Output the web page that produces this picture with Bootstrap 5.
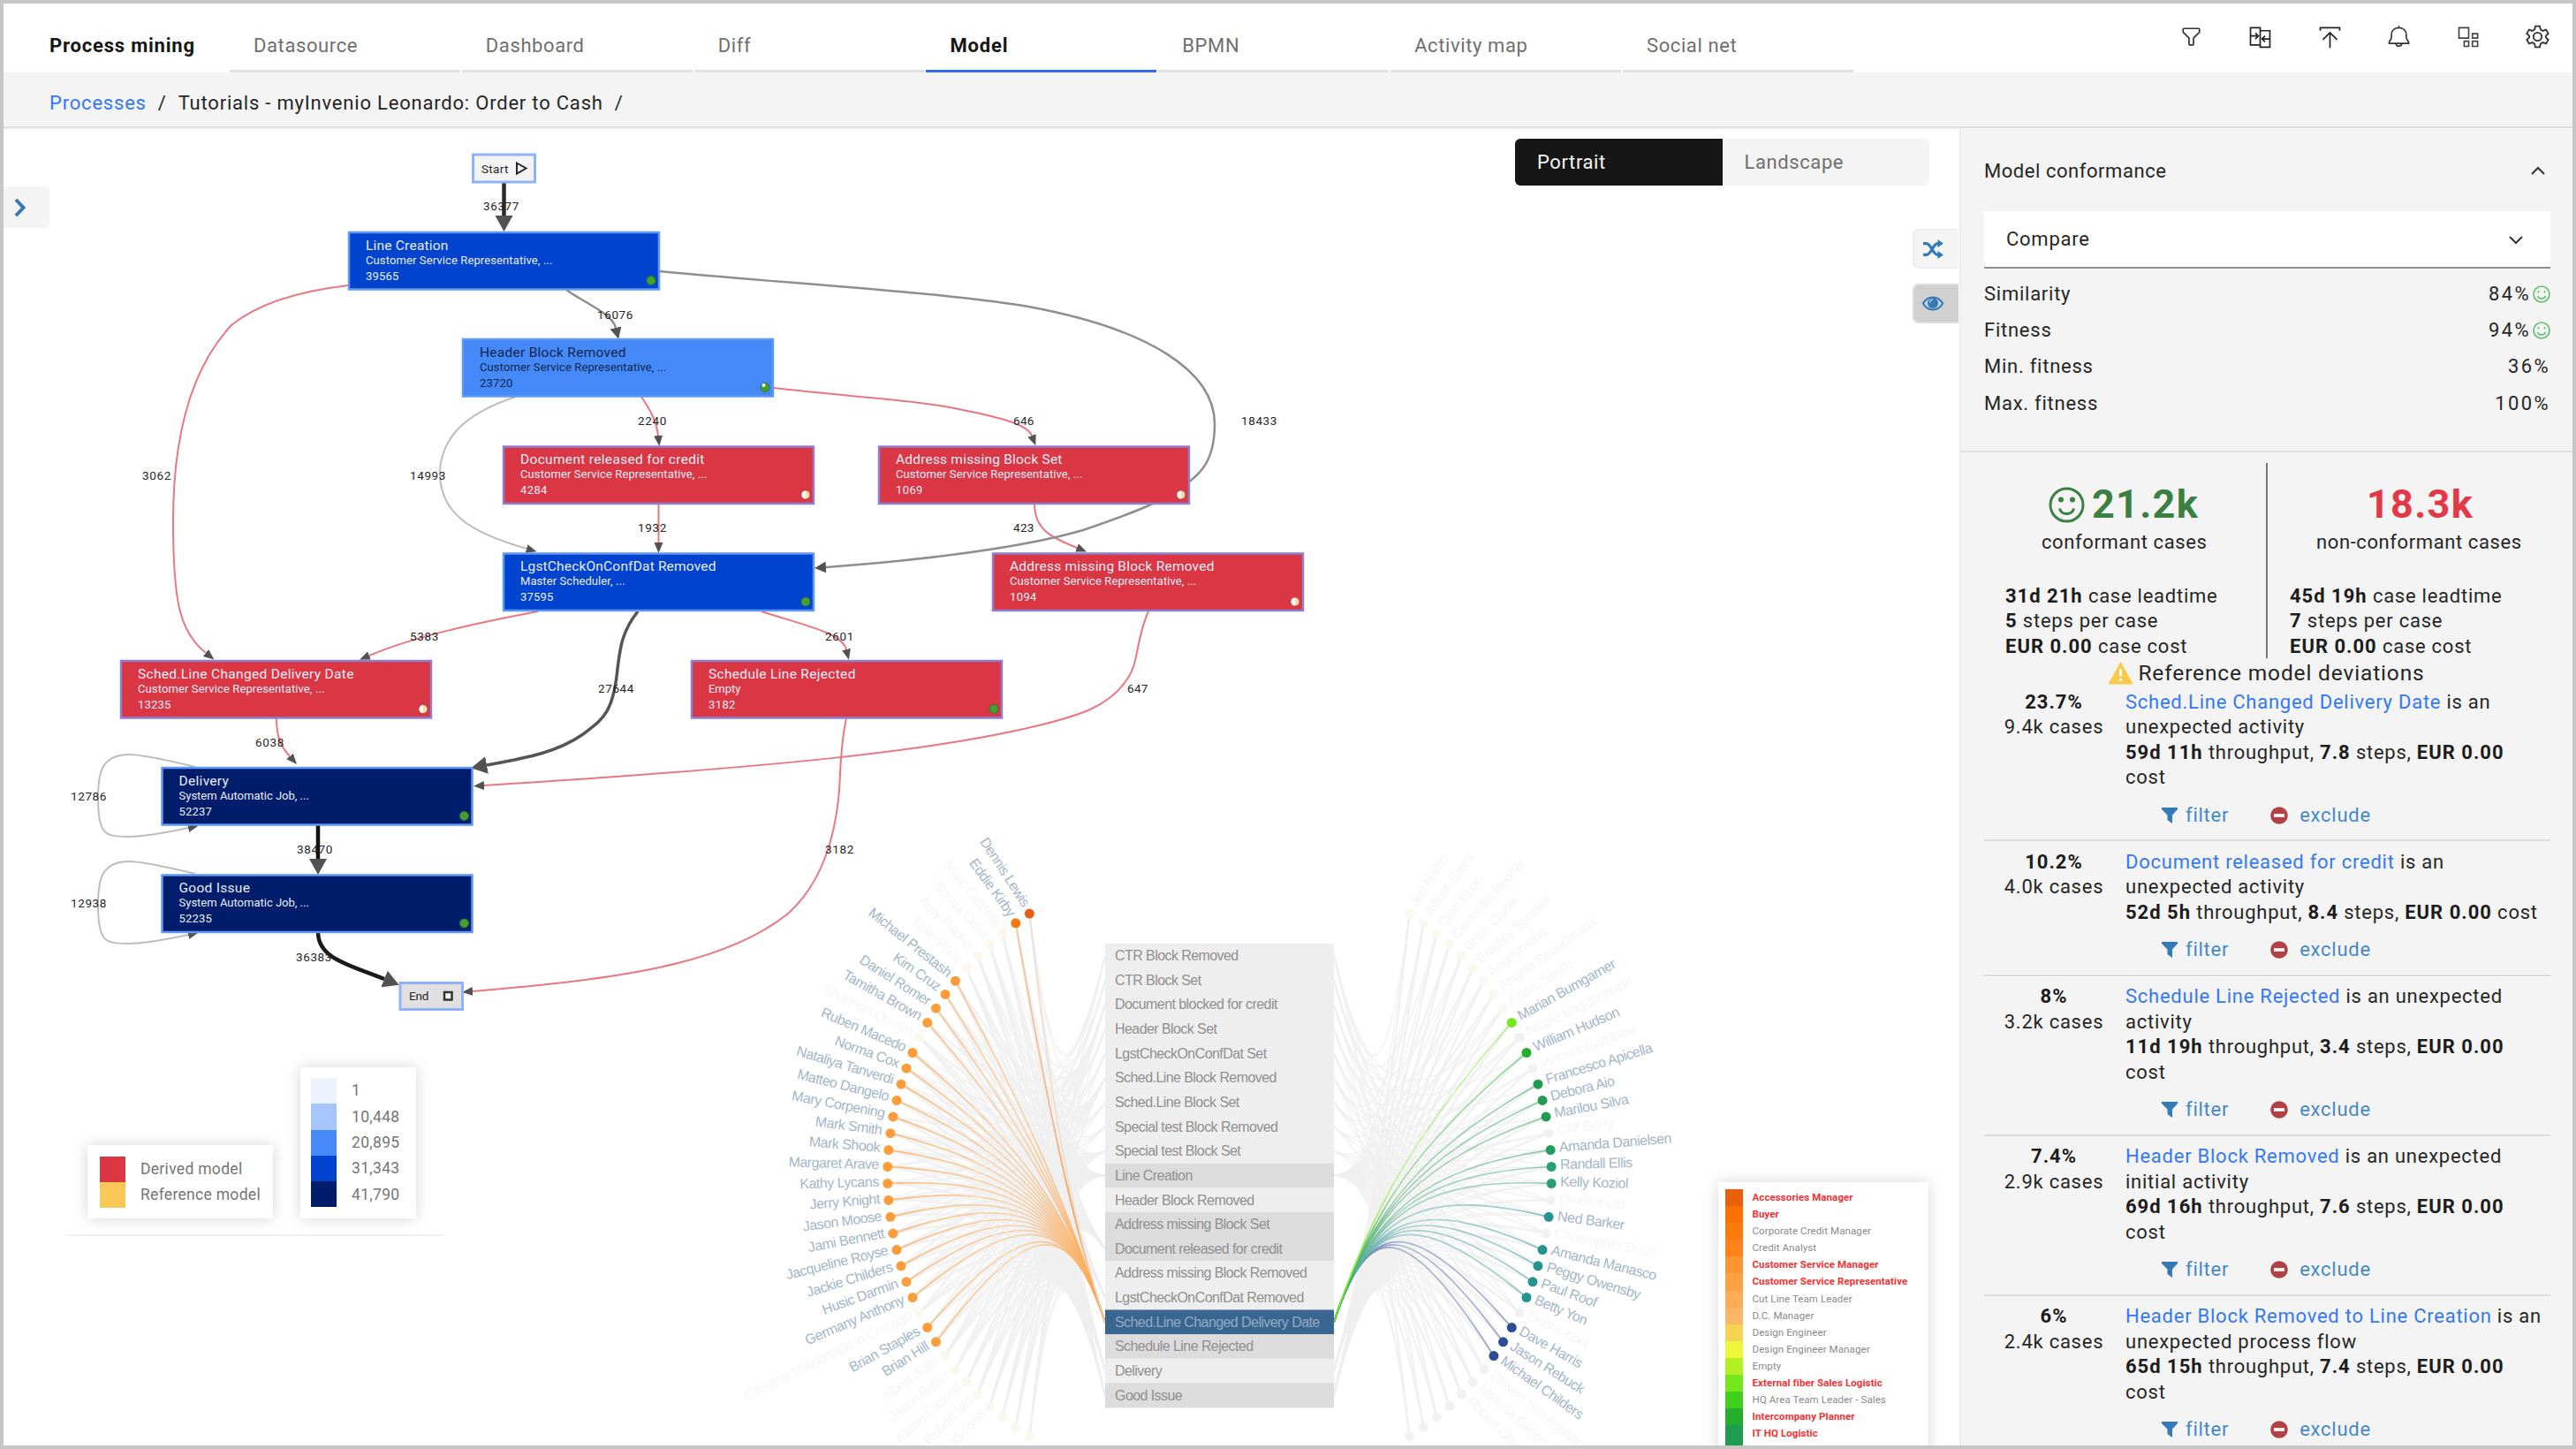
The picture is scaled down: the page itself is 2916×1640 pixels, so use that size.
<!DOCTYPE html>
<html lang="en">
<head>
<meta charset="utf-8">
<title>Process mining</title>
<link href="https://cdn.jsdelivr.net/npm/bootstrap@5.3.0/dist/css/bootstrap.min.css" rel="stylesheet">
<script src="https://cdn.jsdelivr.net/npm/bootstrap@5.3.0/dist/js/bootstrap.bundle.min.js"></script>
<style>
  body{width:2916px;height:1640px;overflow:hidden;border:4px solid #c6c6c6;background:#fff;color:#262626;
    font-family:Roboto,"Noto Sans",sans-serif;font-size:22px;letter-spacing:.6px;line-height:28.5px}
  .topbar{height:78px;padding:0 26px 0 52px}
  .brandname{width:204px;padding-top:34px;font-weight:700;letter-spacing:.8px;color:#161616;white-space:nowrap}
  .tab-item{width:261px;height:78px;margin-right:1.83px;padding:34px 0 0 27px;border-bottom:3px solid #e0e0e0;color:#6f6f6f}
  .tab-item.active{border-color:#2f6bf5;color:#161616;font-weight:700;letter-spacing:.8px}
  .top-icons{gap:51.4px;padding-top:24px}
  .top-icons svg{width:27px;height:27px;display:block}
  .crumbs{height:63px;padding:9px 0 0 52px;gap:13px;letter-spacing:.8px;background:#f4f4f4;border-bottom:2px solid #e0e0e0;margin-bottom:2px;box-shadow:0 2px #f4f4f4}
  .crumbs a,.dev a{color:#3378f6;text-decoration:none}
  .stage{width:2214px}
  .sidepane{width:694px;background:#f4f4f4;border-left:2px solid #ececec;letter-spacing:.75px}
  .switcher{margin:10px 34px 0 0;height:53px;width:469px;border-radius:6px;overflow:hidden;background:#f4f4f4;color:#6f6f6f}
  .switcher>div{width:50%;padding:13px 25px}
  .switcher .on{background:#161616;color:#f4f4f4}
  .edge-btn{right:1px;width:52px;height:45px;background:#f4f4f4;border:2px solid #ededed;border-right:0;border-radius:7px 0 0 7px}
  .edge-btn.on{background:#d0d0d0;border-color:#dcdcdc}
  .graph{left:0;top:0;width:2213px;height:1489px}
  .legend{background:#fff;box-shadow:0 0 16px rgba(0,0,0,.17);color:#757575;font-size:17.5px;letter-spacing:.3px}
  .sw{width:29px;height:29.3px;margin-right:17px}
  .roles{font-size:11.5px;letter-spacing:.1px;line-height:19.05px;color:#8a8a8a}
  .roles .rs{width:19.5px;height:19.1px;margin-right:11px}
  .roles .hot{color:#fb3030;font-weight:700}
  .conf{height:365px;padding:33px 25px 0 26px;border-bottom:2px solid #dedede}
  .conf .heading{letter-spacing:.55px}
  .pick{height:65px;margin-top:30px;padding:3px 25px 0;background:#fff;border-bottom:2px solid #8d8d8d}
  .metric{height:41.3px}
  .metric .val{letter-spacing:2.4px}
  .stats{height:221px;margin-top:12px}
  .stats .half{width:345px;padding:22px 0 0 50px}
  .stats .half+.half{border-left:2px solid #777;padding-left:25px}
  .stats .cap{margin:4px 0 32px;letter-spacing:.6px}
  .big{font-size:45px;line-height:50px;font-weight:700;letter-spacing:1.3px}
  b{font-weight:700;letter-spacing:1px;color:#1c1c1c}
  .devhead{font-size:24.5px;letter-spacing:.85px;line-height:34px;height:34px}
  .dev{margin:0 25px 0 26px;padding-top:9.5px;border-bottom:2px solid #dcdcdc;white-space:nowrap}
  .dev .pct{width:158px;text-align:center}
  .acts{height:55.5px;padding:1px 0 0 201px;color:#4489c8}
</style>
</head>
<body class="d-flex flex-column">
<header class="topbar d-flex flex-shrink-0">
  <div class="brandname">Process mining</div>
  <nav class="d-flex flex-grow-1">
    <div class="tab-item">Datasource</div><div class="tab-item">Dashboard</div><div class="tab-item">Diff</div>
    <div class="tab-item active">Model</div><div class="tab-item">BPMN</div><div class="tab-item">Activity map</div><div class="tab-item">Social net</div>
  </nav>
  <div class="top-icons d-flex">
    <svg viewBox="0 0 32 32" fill="#333"><path d="M18,28H14a2,2,0,0,1-2-2V18.41L4.59,11A2,2,0,0,1,4,9.59V6A2,2,0,0,1,6,4H26a2,2,0,0,1,2,2V9.59A2,2,0,0,1,27.41,11L20,18.41V26A2,2,0,0,1,18,28ZM6,6V9.59l8,8V26h4V17.59l8-8V6Z"/></svg>
    <svg viewBox="0 0 32 32" fill="none" stroke="#222" stroke-width="2"><path d="M16 27H3V4h13v26h13V8H16M3 15h10M9.500 11l4 4-4 4M29 19H19M22.500 15l-4 4 4 4"/></svg>
    <svg viewBox="0 0 32 32" fill="none" stroke="#222" stroke-width="2"><path d="M3 8V4h26v4M16 31V11M6.500 20L16 10.500l9.500 9.500"/></svg>
    <svg viewBox="0 0 32 32" fill="none" stroke="#333" stroke-width="2"><path d="M3 25v-2c2-2 3-3 3-6v-3c0-6 4-10 10-10s10 4 10 10v3c0 3 1 4 3 6v2zM16 4V1.500M12 25c0 5 8 5 8 0"/></svg>
    <svg viewBox="0 0 32 32" fill="none" stroke="#444" stroke-width="2"><path d="M3 4h13v14H3zM21 12h7v6h-7zM10 22h6v7h-6zM21 22h7v7h-7z"/></svg>
    <svg viewBox="0 0 32 32" fill="none" stroke="#333" stroke-width="2.200"><circle cx="16" cy="16" r="5.500"/><path d="M13 2h6l1 4.500 3 1.700 4.400-1.500 3 5.200-3.300 3.100v2l3.300 3.100-3 5.200-4.400-1.500-3 1.700L19 30h-6l-1-4.500-3-1.700-4.400 1.500-3-5.200L4.900 17v-2l-3.300-3.100 3-5.200L9 8.200l3-1.700z"/></svg>
  </div>
</header>
<div class="crumbs d-flex align-items-center flex-shrink-0">
  <a href="#">Processes</a><span>/</span><span>Tutorials - myInvenio Leonardo: Order to Cash</span><span>/</span>
</div>
<main class="d-flex flex-grow-1 overflow-hidden">
  <section class="stage position-relative flex-shrink-0 overflow-hidden">
    <svg class="graph position-absolute" viewBox="4 147 2213 1489" id="graph">
      <defs>
        <marker id="a1" markerUnits="userSpaceOnUse" markerWidth="13" markerHeight="10" refX="0" refY="5" orient="auto"><path d="M0 0L12 5L0 10z" fill="#525252"/></marker>
        <marker id="a2" markerUnits="userSpaceOnUse" markerWidth="15" markerHeight="13" refX="0" refY="6.500" orient="auto"><path d="M0 0L13 6.500L0 13z" fill="#525252"/></marker>
        <marker id="a3" markerUnits="userSpaceOnUse" markerWidth="19" markerHeight="20" refX="0" refY="10" orient="auto"><path d="M0 0L18 10L0 20z" fill="#525252"/></marker>
      </defs>
      <path d="M75 1398H503" stroke="#f1f1f1" stroke-width="2"/>
      <g id="bundle" fill="none"></g>
      <g id="dots"></g>
      <g id="people" font-family="Liberation Sans, Arial, sans-serif" font-size="16"></g>
      <g id="acts" font-family="Liberation Sans, Arial, sans-serif" font-size="16"></g>
      <g fill="none" stroke="#ec7680" stroke-width="2">
        <path marker-end="url(#a1)" d="M394 323C335 330 290 345 262 368C218 415 196 490 196 590C196 680 203 715 233 739"/>
        <path marker-end="url(#a1)" d="M726 449C736 464 743 476 745 493"/>
        <path marker-end="url(#a1)" d="M876 439C960 449 1030 452 1085 463C1130 472 1163 480 1168 493"/>
        <path marker-end="url(#a1)" d="M745.500 570V614"/>
        <path marker-end="url(#a1)" d="M1171 570C1171 600 1190 608 1219 620"/>
        <path marker-end="url(#a1)" d="M609 692C540 705 470 720 418 742"/>
        <path marker-end="url(#a1)" d="M862 692C900 705 953 715 958 735"/>
        <path marker-end="url(#a1)" d="M313 813C313 835 318 845 328 856"/>
        <path marker-end="url(#a1)" d="M1300 692C1285 725 1290 750 1275 770C1255 800 1220 810 1180 820C1060 850 880 868 548 889"/>
        <path marker-end="url(#a1)" d="M958 813C950 850 952 880 949 905C944 950 930 1000 892 1034C820 1092 700 1108 535 1122"/>
      </g>
      <g fill="none" stroke="#bdbdbd" stroke-width="2">
        <path marker-end="url(#a1)" d="M584 449C520 470 499 500 498 535C498 580 530 602 596 621"/>
        <path marker-end="url(#a1)" d="M221 868C180 858 160 854 146 854C112 854 111 880 111 903C111 944 118 947 145 947C165 947 190 942 213 937"/>
        <path marker-end="url(#a1)" d="M221 989C180 979 160 975 146 975C112 975 111 1001 111 1024C111 1065 118 1068 145 1068C165 1068 190 1063 213 1058"/>
      </g>
      <g fill="none" stroke="#8e8e8e" stroke-width="2.500">
        <path marker-end="url(#a2)" d="M641 328C662 343 693 355 697 371"/>
        <path marker-end="url(#a2)" d="M746 307C880 320 1060 330 1164 347C1300 372 1375 420 1375 480C1375 520 1360 535 1345 546C1320 566 1290 578 1226 600C1150 622 1040 634 935 642"/>
      </g>
      <path fill="none" stroke="#555" stroke-width="3.500" marker-end="url(#a3)" d="M722 692C703 716 702 735 699 757C694 810 680 815 660 831C630 852 594 858 551 866"/>
      <path fill="none" stroke="#2a2a2a" stroke-width="4.500" marker-end="url(#a3)" d="M570.500 207V244"/>
      <path fill="none" stroke="#111" stroke-width="4.500" marker-end="url(#a3)" d="M360 934V972"/>
      <path fill="none" stroke="#1a1a1a" stroke-width="4.500" marker-end="url(#a3)" d="M360 1055C360 1085 395 1092 435 1108"/>
      <g id="nodes"></g>
      <g id="counts" font-size="13.500" fill="#262626"></g>
      <g stroke="#8db4fb" stroke-width="3" font-size="13.500">
        <rect x="535.500" y="175" width="70" height="31" fill="#f4f4f4"/>
        <rect x="453" y="1112.500" width="70.500" height="30" fill="#e0e0e0"/>
        <g stroke="none" fill="#262626"><text x="545" y="195.500" textLength="31">Start</text><text x="463" y="1132" textLength="23">End</text></g>
        <path d="M585 184.500L595.500 190.500L585 196.500z" fill="none" stroke="#262626" stroke-width="2"/>
        <rect x="503" y="1123" width="8.500" height="8.500" fill="#f4f4f4" stroke="#333" stroke-width="2.500"/>
      </g>
    </svg>
    <div class="switcher d-flex ms-auto position-relative"><div class="on">Portrait</div><div>Landscape</div></div>
    <div class="position-absolute start-0 d-flex align-items-center ps-2" style="top:64px;width:52px;height:47px;background:#f4f4f4;border-radius:0 5px 5px 0">
      <svg width="24" height="24" viewBox="0 0 24 24" fill="none" stroke="#337ab7" stroke-width="4"><path d="M6 3l8.500 9L6 21"/></svg>
    </div>
    <div class="edge-btn position-absolute d-flex align-items-center ps-2" style="top:112px">
      <svg width="26" height="22" viewBox="0 0 28 24" fill="none" stroke="#337ab7" stroke-width="3.500"><path d="M2 5h4c6 0 8 14 14 14h1M2 19h4c6 0 8-14 14-14h1"/><path d="M20 0l7 5-7 5zM20 14l7 5-7 5z" fill="#337ab7" stroke="none"/></svg>
    </div>
    <div class="edge-btn on position-absolute d-flex align-items-center ps-2" style="top:174px">
      <svg width="26" height="19" viewBox="0 0 28 20"><path d="M2 10c6-10 18-10 24 0c-6 10-18 10-24 0z" fill="#c5d6e6" stroke="#337ab7" stroke-width="2.200"/><circle cx="14" cy="9.500" r="6.500" fill="#337ab7"/><path d="M10.500 9c0-2.500 1.500-4 3.500-4" stroke="#c5d6e6" stroke-width="1.500" fill="none"/></svg>
    </div>
    <div class="legend position-absolute" style="left:95px;top:1149px;width:210px;height:83px;padding:12.500px 14px">
      <div class="d-flex align-items-center"><span class="sw" style="background:#da3644"></span>Derived model</div>
      <div class="d-flex align-items-center text-nowrap"><span class="sw" style="background:#fbc756"></span>Reference model</div>
    </div>
    <div class="legend position-absolute" style="left:336px;top:1061px;width:131px;height:171px;padding:12px">
      <div class="d-flex align-items-center"><span class="sw" style="background:#edf3fe"></span>1</div>
      <div class="d-flex align-items-center"><span class="sw" style="background:#a6c6fb"></span>10,448</div>
      <div class="d-flex align-items-center"><span class="sw" style="background:#4589f8"></span>20,895</div>
      <div class="d-flex align-items-center"><span class="sw" style="background:#0043ce"></span>31,343</div>
      <div class="d-flex align-items-center"><span class="sw" style="background:#001d6c"></span>41,790</div>
    </div>
    <div class="legend roles position-absolute text-nowrap" style="left:1941px;top:1191px;width:238px;height:310px;padding:8px 8px" id="roles"></div>
  </section>
  <aside class="sidepane flex-shrink-0">
    <div class="conf">
      <div class="heading d-flex justify-content-between align-items-center"><span>Model conformance</span>
        <svg width="20" height="14" class="me-1" viewBox="0 0 20 14" fill="none" stroke="#333" stroke-width="2"><path d="M3 10l7-7 7 7"/></svg></div>
      <div class="pick d-flex justify-content-between align-items-center"><span>Compare</span>
        <svg width="20" height="14" viewBox="0 0 20 14" class="me-1" fill="none" stroke="#333" stroke-width="2"><path d="M3 3l7 7 7-7"/></svg></div>
      <div style="padding-top:9px" id="metrics"></div>
    </div>
    <div class="stats d-flex">
      <div class="half">
        <div class="d-flex align-items-center" style="color:#3a8040;gap:8px;padding-left:49px">
          <svg width="41" height="41" viewBox="0 0 41 41" fill="none" stroke="#3a8040" stroke-width="3"><circle cx="20.500" cy="20.500" r="18.500"/><path d="M12.500 24.500c2 8 14 8 16 0"/><g fill="#3a8040" stroke="none"><circle cx="14" cy="14.500" r="3"/><circle cx="27" cy="14.500" r="3"/></g></svg>
          <span class="big">21.2k</span></div>
        <div class="cap" style="padding-left:41px">conformant cases</div>
        <div><b>31d 21h</b> case leadtime</div><div><b>5</b> steps per case</div><div><b>EUR 0.00</b> case cost</div>
      </div>
      <div class="half">
        <div class="big" style="color:#e23848;padding-left:87px">18.3k</div>
        <div class="cap" style="padding-left:30px">non-conformant cases</div>
        <div><b>45d 19h</b> case leadtime</div><div><b>7</b> steps per case</div><div><b>EUR 0.00</b> case cost</div>
      </div>
    </div>
    <div class="devhead d-flex justify-content-center align-items-center" style="gap:6px">
      <svg width="27" height="26" viewBox="0 0 27 26"><path d="M13.500 2L26 24.500H1z" fill="#f9ca4b" stroke="#f9ca4b" stroke-width="2"/><path d="M13.500 8.500v8M13.500 19v3" stroke="#fff" stroke-width="3"/></svg>
      Reference model deviations</div>
    <div id="devs" style="margin-top:-8px"></div>
  </aside>
</main>
<script>
const $ = id => document.getElementById(id);
const R = '#da3644', B = '#0043ce', N = '#001d6c', csr = ['Customer Service Representative, ...', 212], sys = ['System Automatic Job, ...', 148];
const nodes = [
  [394,262,'Line Creation',94,csr,'39565',B,'g'], [523,383,'Header Block Removed',166,csr,'23720','#4589f8','h'],
  [569,504.5,'Document released for credit',209,csr,'4284',R,'w'], [994,504.5,'Address missing Block Set',189,csr,'1069',R,'w'],
  [569,625.5,'LgstCheckOnConfDat Removed',222,['Master Scheduler, ...',119],'37595',B,'g'],
  [1123,625.5,'Address missing Block Removed',232,csr,'1094',R,'w'],
  [136,747,'Sched.Line Changed Delivery Date',245,csr,'13235',R,'w'],
  [782,747,'Schedule Line Rejected',167,['Empty',37],'3182',R,'g'],
  [182.5,868,'Delivery',57,sys,'52237',N,'g'], [182.5,989.5,'Good Issue',81,sys,'52235',N,'g']];
$('nodes').innerHTML = nodes.map(([x,y,t,w,s,c,f,d]) => {
  const ink = d === 'h' ? '#10264d' : '#e9ecf7';
  return `<rect x="${x+1}" y="${y+1}" width="351" height="64.500" fill="${f}" stroke="${f===R?'#8d7fd2':'#5f98f7'}" stroke-width="2.500"/>
  <g fill="${ink}"><text x="${x+20}" y="${y+20.5}" font-size="15.500" textLength="${w}">${t}</text>
  <text x="${x+20}" y="${y+36.5}" font-size="13" textLength="${s[1]}">${s[0]}</text>
  <text x="${x+20}" y="${y+54.5}" font-size="13" textLength="${c.length>4?38:31}">${c}</text></g>
  <circle cx="${x+343}" cy="${y+55.5}" r="5" fill="${d==='w'?'#ffd9a8':'#43a02e'}" stroke="${d==='w'?'#b0504a':'#2c7a34'}" stroke-width="1"/>`
  + (d==='w' ? `<path d="M${x+343} ${y+51}a4.500 4.500 0 0 0 0 9z" fill="#fff"/>` : d==='h' ? `<circle cx="${x+341.5}" cy="${y+53}" r="2" fill="#fff"/>` : '');
}).join('');
$('counts').innerHTML = [['36377',547,238],['16076',676,361],['2240',722,481],['646',1147,481],['18433',1405,481],['14993',464,543],['3062',161,543],
  ['1932',722,602],['423',1147,602],['5383',464,725],['2601',934,725],['27644',677,784],['647',1276,784],['6038',289,845],['12786',80,906],
  ['38470',336,966],['3182',934,966],['12938',80,1027],['36383',335,1088]]
  .map(([t,x,y]) => `<text x="${x}" y="${y}" textLength="${[0,0,0,24,33,41][t.length]}">${t}</text>`).join('');

/* activity list in the middle of the people chart */
const rows = ['CTR Block Removed','CTR Block Set','Document blocked for credit','Header Block Set','LgstCheckOnConfDat Set','Sched.Line Block Removed','Sched.Line Block Set','Special test Block Removed','Special test Block Set','Line Creation','Header Block Removed','Address missing Block Set','Document released for credit','Address missing Block Removed','LgstCheckOnConfDat Removed','Sched.Line Changed Delivery Date','Schedule Line Rejected','Delivery','Good Issue'];
const top0 = 1068, rh = 27.63, rowY = i => top0 + (i + .5) * rh;
$('acts').innerHTML = rows.map((t,i) => {
  const f = i === 15 ? '#396690' : [9,11,12,16,18].includes(i) ? '#dcdcdc' : '#eee';
  return `<rect x="1251" y="${top0+i*rh}" width="259" height="${rh+.5}" fill="${f}"/><text x="1262" y="${top0+i*rh+19.2}" letter-spacing="-.57" fill="${i===15?'#93aac2':'#909090'}">${t}</text>`;
}).join('');

/* people on both arcs: a leading ~ marks someone who is not linked to the selected activity */
const left = ['Dennis Lewis','Eddie Kirby','~Marc Cabrera','~Sonya Odell','~Amy Packer','~Mike Price','Michael Prestash','Kim Cruz','Daniel Romer','Tamitha Brown','~Shannon Quintin','Ruben Macedo','Norma Cox','Nataliya Tanverdi','Matteo Dangelo','Mary Corpening','Mark Smith','Mark Shook','Margaret Arave','Kathy Lycans','Jerry Knight','Jason Moose','Jami Bennett','Jacqueline Royse','Jackie Childers','Husic Darmin','Germany Anthony','~Carolina Maldonado in Chicago','Brian Staples','Brian Hill','~Albert Jutte','~Jason Butler','~Alison Lockett','~Robert Ian','~JS Avila','~','~','~'];
const right = ['~Jim Harris','~Adrian Brock','~Olen Ebon','~Carmelita Bednar','~Brian Carter','~Bradley Spooler','~Anonymous','~Angela Beuadreaux','~Adam Smith','Marian Bumgarner','~Nicole Baggarmann','William Hudson','~Vincent Gambiter','Francesco Apicella','Debora Aio','Marilou Silva','~Cliff Berry','Amanda Danielsen','Randall Ellis','Kelly Koziol','~Dwellet Ltd','Ned Barker','~Christopher Bush','Amanda Manasco','Peggy Owensby','Paul Roof','Betty Yon','~Debra Kool','Dave Harris','Jason Rebuck','Michael Childers','~Steven San Agustin','~Melissa Gilbert','~Robert Olson','~','~','~','~'];
const rightDot = i => i < 10 ? '#74e81c' : i < 12 ? '#24ae2c' : i < 16 ? '#1f9c50' : i < 18 ? '#229c62' : i < 20 ? '#2a9e78' : i < 27 ? '#259490' : '#2c4d96';
const strands = ['', ''];
let grey = '', dots = '', ppl = '';
[[left,0],[right,1]].forEach(([list,side]) => list.forEach((raw,i) => {
  const off = raw[0] === '~', name = raw.replace('~',''), a = (i - 18.5) * 3.08, rad = a * Math.PI / 180;
  const mx = x => side ? 2761 - x : x;
  const lx = 1357.7 - 353 * Math.cos(rad), y = 1330 + 353 * Math.sin(rad), x = mx(lx);
  const col = side ? rightDot(i) : i === 0 ? '#e8600f' : i === 1 ? '#fb760b' : '#ff9c3a';
  const dim = side ? (i < 10 ? '#f8faee' : '#f0f2f1') : i < 12 ? '#fdf6ec' : '#f8f8ec';
  dots += `<circle cx="${x}" cy="${y}" r="5.500" fill="${off ? dim : col}"/>`;
  const link = (ry, k, m) => `M${mx(1251)} ${ry}C${mx(1210)} ${k} ${mx(1150 + .26 * (lx - 1010))} ${m} ${x} ${y}`;
  for (let j = 0; j < (side ? 4 : 7); j++) {
    const r = [9,18,17,(i * 5) % 9,12,14,(i * 3 + 2) % 9][j], d = rowY(r) - 1330;
    grey += `<path d="${link(rowY(r), 1330 + d * .3, 1325 + d * .1 + .27 * (y - 1330))}"/>`;
  }
  if (!off) strands[side] = `<path d="${link(rowY(15), 1372, 1330 + .27 * (y - 1330))}" stroke="${!side && i === 0 ? '#f3cfae' : col}"/>` + strands[side];
  const tx = side ? 10 : -10;
  if (name) ppl += `<text transform="translate(${x} ${y}) rotate(${side ? a : -a})" x="${tx}" y="3" text-anchor="${side ? 'start' : 'end'}" letter-spacing="-.5" fill="${off ? '#f6f6f6' : '#a3b6ca'}">${name}</text>`;
}));
$('bundle').innerHTML = `<defs>
  <linearGradient id="fl" gradientUnits="userSpaceOnUse" x1="1005" x2="1251" y1="0" y2="0"><stop offset="0" stop-color="#fff" stop-opacity=".65"/><stop offset=".6" stop-color="#fff" stop-opacity=".35"/><stop offset=".8" stop-color="#fff" stop-opacity=".55"/><stop offset="1" stop-color="#fff" stop-opacity="1"/></linearGradient>
  <linearGradient id="fr" gradientUnits="userSpaceOnUse" x1="1755" x2="1510" y1="0" y2="0"><stop offset="0" stop-color="#fff" stop-opacity=".5"/><stop offset=".7" stop-color="#fff" stop-opacity=".35"/><stop offset="1" stop-color="#fff" stop-opacity="1"/></linearGradient>
  <mask id="ml" maskUnits="userSpaceOnUse" x="990" y="1000" width="262" height="640"><rect x="990" y="1000" width="262" height="640" fill="url(#fl)"/></mask>
  <mask id="mr" maskUnits="userSpaceOnUse" x="1509" y="1000" width="262" height="640"><rect x="1509" y="1000" width="262" height="640" fill="url(#fr)"/></mask></defs>
  <g stroke="#f0f0f0" stroke-opacity=".7" stroke-width="2">${grey}</g>
  <g stroke-width="1.700" mask="url(#ml)">${strands[0]}</g>
  <g stroke-width="1.700" mask="url(#mr)">${strands[1]}</g>`;
$('dots').innerHTML = dots;
$('people').innerHTML = ppl;

$('roles').innerHTML = [['Accessories Manager',1,'#e8600a'],['Buyer',1,'#fc7000'],['Corporate Credit Manager',0,'#ff7a0c'],['Credit Analyst',0,'#ff831a'],['Customer Service Manager',1,'#ff9432'],['Customer Service Representative',1,'#ffa042'],['Cut Line Team Leader',0,'#ffab57'],['D.C. Manager',0,'#fdb566'],['Design Engineer',0,'#f5d452'],['Design Engineer Manager',0,'#ecf63a'],['Empty',0,'#b0f024'],['External fiber Sales Logistic',1,'#74e81c'],['HQ Area Team Leader - Sales',0,'#3fd01c'],['Intercompany Planner',1,'#24ae2c'],['IT HQ Logistic',1,'#1f9c50'],['',0,'#1f9c50']]
  .map(([t,h,c]) => `<div class="d-flex ${h?'hot':''}"><span class="rs" style="background:${c}"></span>${t}</div>`).join('');

const smile = '<svg width="20" height="20" viewBox="0 0 20 20" style="margin-left:2px" fill="none" stroke="#5fbf70" stroke-width="1.600"><circle cx="10" cy="10" r="9"/><path d="M5.500 12c1.500 4 7.500 4 9 0M6.500 6v2.500M13.500 6v2.500"/></svg>';
$('metrics').innerHTML = [['Similarity','84%',1],['Fitness','94%',1],['Min. fitness','36%'],['Max. fitness','100%']]
  .map(([a,b,s]) => `<div class="metric d-flex align-items-center"><span class="me-auto">${a}</span><span class="val">${b}</span>${s?smile:''}</div>`).join('');

$('devs').innerHTML = [
  ['23.7%','9.4k','<a href="#">Sched.Line Changed Delivery Date</a> is an<br>unexpected activity','59d 11h','7.8','<br>'],
  ['10.2%','4.0k','<a href="#">Document released for credit</a> is an<br>unexpected activity','52d 5h','8.4',' '],
  ['8%','3.2k','<a href="#">Schedule Line Rejected</a> is an unexpected<br>activity','11d 19h','3.4','<br>'],
  ['7.4%','2.9k','<a href="#">Header Block Removed</a> is an unexpected<br>initial activity','69d 16h','7.6','<br>'],
  ['6%','2.4k','<a href="#">Header Block Removed to Line Creation</a> is an<br>unexpected process flow','65d 15h','7.4','<br>']]
  .map(([p,c,t,d,s,br]) => `<div class="dev"><div class="d-flex"><div class="pct"><b>${p}</b><br>${c} cases</div><div style="padding-left:2px">${t}<br><b>${d}</b> throughput, <b>${s}</b> steps, <b>EUR 0.00</b>${br}cost</div></div>
  <div class="acts d-flex align-items-center"><svg width="18" height="18" viewBox="0 0 18 18" fill="#337ab7"><path d="M0 0h18v2l-6 6.500V18l-5.500-4V8.500L0 2z"/></svg><span style="margin:0 47px 0 9px">filter</span>
  <svg width="20" height="20" viewBox="0 0 20 20"><circle cx="10" cy="10" r="9.800" fill="#b04246"/><path d="M4 10h12" stroke="#fff" stroke-width="3.600"/></svg><span style="margin-left:13px">exclude</span></div></div>`).join('');
</script>
</body>
</html>
